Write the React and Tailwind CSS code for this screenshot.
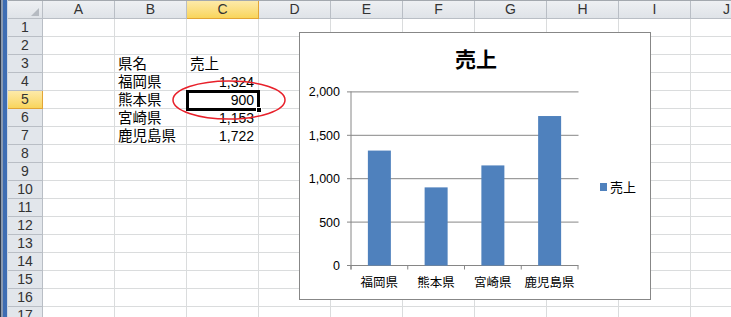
import React from 'react';

const cols = ['A', 'B', 'C', 'D', 'E', 'F', 'G', 'H', 'I', 'J'];
const rows = Array.from({ length: 17 }, (_, i) => i + 1);

const cells = {
  'B3': { text: '県名' },
  'C3': { text: '売上' },
  'B4': { text: '福岡県' },
  'C4': { text: '1,324', num: true },
  'B5': { text: '熊本県' },
  'C5': { text: '900', num: true },
  'B6': { text: '宮崎県' },
  'C6': { text: '1,153', num: true },
  'B7': { text: '鹿児島県' },
  'C7': { text: '1,722', num: true },
};

const data = [
  { name: '福岡県', value: 1324 },
  { name: '熊本県', value: 900 },
  { name: '宮崎県', value: 1153 },
  { name: '鹿児島県', value: 1722 },
];

const jp = '"Noto Sans CJK JP", "Liberation Sans", sans-serif';

const Chart = () => {
  const y0 = 232.5;
  const scale = 173.6 / 2000;
  const axisX = 51;
  const catW = 56.75;
  return (
    <div className="absolute left-[299px] top-[32px] h-[268px] w-[352px] border border-[#878787] bg-white">
      <svg width="350" height="266" className="absolute left-0 top-0">
        <text x="176" y="34" textAnchor="middle" fontSize="21" fontWeight="700" fill="#000" fontFamily={jp}>
          売上
        </text>
        {[0, 500, 1000, 1500, 2000].map((v) => {
          const y = y0 - v * scale;
          return (
            <g key={v}>
              <line x1="47" x2="278.5" y1={y} y2={y} stroke="#868686" strokeWidth="1" />
              <text x="40" y={y + 4.5} textAnchor="end" fontSize="12.5" fill="#000" fontFamily='"Liberation Sans", sans-serif'>
                {v.toLocaleString('en-US')}
              </text>
            </g>
          );
        })}
        <line x1={axisX} x2={axisX} y1="58.5" y2={y0 + 4} stroke="#868686" />
        {[0, 1, 2, 3, 4].map((i) => (
          <line key={i} x1={axisX + i * catW} x2={axisX + i * catW} y1={y0} y2={y0 + 4} stroke="#868686" />
        ))}
        {data.map((d, i) => {
          const cx = axisX + catW * (i + 0.5);
          const h = d.value * scale;
          return (
            <g key={d.name}>
              <rect x={cx - 11.5} y={y0 - h} width="23" height={h} fill="#4f81bd" />
              <text x={cx} y="254" textAnchor="middle" fontSize="12.5" fill="#000" fontFamily={jp}>
                {d.name}
              </text>
            </g>
          );
        })}
        <rect x="300" y="150" width="7" height="8" fill="#4f81bd" />
        <text x="310" y="159" fontSize="13" fill="#000" fontFamily={jp}>
          売上
        </text>
      </svg>
    </div>
  );
};

export default function App() {
  return (
    <div className="relative flex h-[317px] w-[731px] overflow-hidden bg-white" style={{ fontFamily: jp }}>
      <div className="flex h-full w-[8px] shrink-0">
        <div className="w-[1px] bg-[#2e3a4c]" />
        <div className="w-[2px] bg-[#8b9ab0]" />
        <div className="w-[4px] bg-[#3e6db3]" />
        <div className="w-[1px] bg-[#cdd6e3]" />
      </div>

      <div className="flex flex-col border-t border-[#a3a8ae]">
        <div className="flex h-[18px] shrink-0">
          <div className="relative h-[18px] w-[35px] shrink-0 border-r border-b border-[#b9bec5] bg-gradient-to-b from-[#eef0f3] to-[#dfe3e8]">
            <div className="absolute bottom-[2px] right-[3px] h-0 w-0 border-l-[8px] border-t-[8px] border-l-transparent border-t-transparent border-b-[0px] border-r-[8px] border-r-[#b6bbc2]" />
          </div>
          {cols.map((c) => (
            <div
              key={c}
              className={
                c === 'C'
                  ? 'flex h-[18px] w-[72px] shrink-0 items-center justify-center border-r border-b border-[#e2a536] bg-gradient-to-b from-[#fdeaa8] to-[#f9d55a] text-[14px] text-[#333]'
                  : 'flex h-[18px] w-[72px] shrink-0 items-center justify-center border-r border-b border-[#b9bec5] bg-gradient-to-b from-[#eef0f3] to-[#dfe3e8] text-[14px] text-[#333]'
              }
              style={{ fontFamily: '"Liberation Sans", sans-serif' }}
            >
              {c}
            </div>
          ))}
        </div>

        {rows.map((r) => (
          <div key={r} className="flex h-[18px] shrink-0">
            <div
              className={
                r === 5
                  ? 'flex h-[18px] w-[35px] shrink-0 items-center justify-center border-r border-b border-[#e2a536] bg-gradient-to-b from-[#fdeaa8] to-[#f9d55a] text-[14px] text-[#333]'
                  : 'flex h-[18px] w-[35px] shrink-0 items-center justify-center border-r border-b border-[#b9bec5] bg-[#e2e6eb] text-[14px] text-[#333]'
              }
              style={{ fontFamily: '"Liberation Sans", sans-serif' }}
            >
              {r}
            </div>
            {cols.map((c) => {
              const cell = cells[c + r];
              return (
                <div
                  key={c}
                  className={
                    cell && cell.num
                      ? 'flex h-[18px] w-[72px] shrink-0 items-center justify-end whitespace-nowrap border-r border-b border-[#dadcdd] pr-[4px] text-[14px] leading-none text-black'
                      : 'flex h-[18px] w-[72px] shrink-0 items-center whitespace-nowrap border-r border-b border-[#dadcdd] pl-[3px] text-[14.5px] leading-none text-black'
                  }
                  style={cell && cell.num ? { fontFamily: '"Liberation Sans", sans-serif' } : undefined}
                >
                  {cell ? cell.text : null}
                </div>
              );
            })}
          </div>
        ))}
      </div>

      {/* selected cell C5 */}
      <div className="pointer-events-none absolute left-[186px] top-[90px] h-[21px] w-[74px] border-[3px] border-black" />
      <div className="pointer-events-none absolute left-[256px] top-[107px] h-[6px] w-[6px] border border-white bg-black" />

      {/* red circle annotation */}
      <svg className="pointer-events-none absolute left-[170px] top-[78px]" width="120" height="45">
        <ellipse cx="59" cy="22" rx="56" ry="19" fill="none" stroke="#e8202a" strokeWidth="1.5" />
      </svg>

      <Chart />
    </div>
  );
}
